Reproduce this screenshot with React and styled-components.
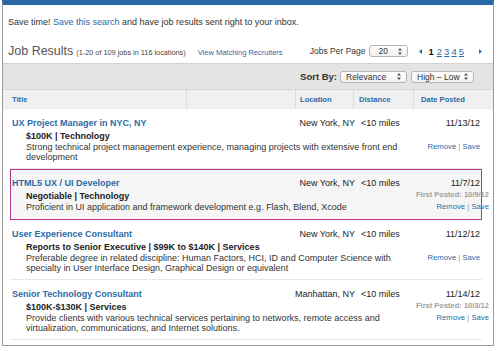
import React from "react";
import styled, { createGlobalStyle } from "styled-components";

const Global = createGlobalStyle`
  html, body { margin: 0; padding: 0; background: #fff; }
  body { font-family: "Liberation Sans", Arial, Helvetica, sans-serif; color: #333; }
`;

const BLUE = "#2d6aa8";

const Frame = styled.div`
  width: 490px;
  margin-left: 2px;
  border-top: 5px solid #2a67a6;
  border-left: 1px solid #9a9a9a;
  border-right: 1px solid #9a9a9a;
  border-bottom: 1px solid #9a9a9a;
  padding-bottom: 5px;
`;

const SaveRow = styled.div`
  padding: 11px 5px 0;
  font-size: 9px;
  line-height: 12px;
  color: #333;
`;

const Link = styled.a`
  color: ${BLUE};
  text-decoration: ${(p) => (p.$underline ? "underline" : "none")};
  cursor: pointer;
`;

const ResultsRow = styled.div`
  display: flex;
  align-items: center;
  height: 16px;
  padding: 15px 11px 4px 5px;
`;

const Heading = styled.div`
  display: flex;
  align-items: baseline;
  flex: 1;
`;

const HeadingTitle = styled.span`
  font-size: 12.5px;
  color: #555;
`;

const HeadingMeta = styled.span`
  font-size: 7.3px;
  color: #444;
  margin-left: 3px;
`;

const HeadingLink = styled(Link)`
  font-size: 7.5px;
  margin-left: 12px;
`;

const PerPage = styled.div`
  display: flex;
  align-items: center;
  font-size: 8.5px;
  color: #333;
`;

const SelectBox = styled.div`
  display: flex;
  align-items: center;
  justify-content: space-between;
  box-sizing: border-box;
  width: ${(p) => p.$w}px;
  height: ${(p) => p.$h || 12}px;
  margin-left: ${(p) => p.$ml || 0}px;
  padding: 0 5px 0 ${(p) => p.$pl || 5}px;
  border: 1px solid #b4b4b4;
  border-radius: 3px;
  background: linear-gradient(#ffffff, #f1f1f1);
  font-size: 8.5px;
  color: #333;
`;

const Pager = styled.div`
  display: flex;
  align-items: center;
  gap: 2px;
  margin-left: 11px;
  font-size: 9.5px;
`;

const PageCurrent = styled.span`
  font-weight: bold;
  color: #111;
  margin: 0 1px 0 5px;
`;

const PagerNext = styled.span`
  display: flex;
  margin-left: 13px;
`;

const SortBar = styled.div`
  display: flex;
  align-items: center;
  justify-content: flex-end;
  height: 25px;
  padding-right: 19px;
  background: #e4e4e4;
  border-top: 1px solid #d2d2d2;
`;

const SortLabel = styled.span`
  font-size: 9.5px;
  font-weight: bold;
  color: #333;
  margin-right: 3px;
`;

const HeaderRow = styled.div`
  display: grid;
  grid-template-columns: 183px 109px 58px 60px 1fr;
  height: 19px;
  background: #f0f0f0;
  border-top: 1px solid #d6d6d6;
`;

const HeaderCell = styled.div`
  display: flex;
  align-items: center;
  padding-left: ${(p) => p.$pl}px;
  border-left: ${(p) => (p.$first ? "none" : "1px solid #dcdcdc")};
  font-size: 7.6px;
  font-weight: bold;
  color: ${BLUE};
`;

const List = styled.div`
  margin: 0 11px 0 7px;
`;

const Row = styled.div`
  padding: ${(p) => (p.$hl ? "7px 1px 7px" : "8px 2px 6px")};
  border: ${(p) => (p.$hl ? "1px solid #b2378d" : "none")};
  border-bottom: 1px solid ${(p) => (p.$hl ? "#b2378d" : "#e6e6e6")};
  background: ${(p) => (p.$hl ? "#f5f5f5" : "transparent")};
`;

const TopLine = styled.div`
  display: grid;
  grid-template-columns: 283px 62px 60px 1fr;
  line-height: 13px;
  font-size: 9px;
`;

const JobTitle = styled(Link)`
  font-weight: bold;
`;

const Location = styled.span`
  text-align: right;
  padding-right: 2px;
  color: #222;
  white-space: nowrap;
`;

const Distance = styled.span`
  padding-left: 4px;
  color: #222;
`;

const DateCell = styled.span`
  text-align: right;
  color: #222;
`;

const Body = styled.div`
  display: grid;
  grid-template-columns: 404px 1fr;
  grid-template-rows: 12px auto;
`;

const Details = styled.div`
  padding-left: 14px;
  font-size: 9px;
  line-height: 12px;
  font-weight: bold;
  color: #222;
  white-space: nowrap;
`;

const FirstPosted = styled.div`
  text-align: right;
  font-size: 7.5px;
  line-height: 9px;
  font-weight: bold;
  color: #a0a0a0;
  white-space: nowrap;
`;

const Desc = styled.div`
  padding-left: 14px;
  font-size: 9px;
  line-height: 10px;
  color: #333;
`;

const Actions = styled.div`
  text-align: right;
  font-size: 7.7px;
  line-height: 10px;
  color: #999;
  white-space: nowrap;
`;

const Arrows = () => (
  <svg width="4" height="7" viewBox="0 0 4 7">
    <path d="M2 0 L4 2.5 L0 2.5 Z M0 4.5 L4 4.5 L2 7 Z" fill="#555" />
  </svg>
);

const Tri = ({ dir }) => (
  <svg width="3" height="5" viewBox="0 0 3 5">
    <path d={dir === "left" ? "M3 0 L0 2.5 L3 5 Z" : "M0 0 L3 2.5 L0 5 Z"} fill={BLUE} />
  </svg>
);

const jobs = [
  {
    title: "UX Project Manager in NYC, NY",
    location: "New York, NY",
    distance: "<10 miles",
    date: "11/13/12",
    details: "$100K | Technology",
    desc: "Strong technical project management experience, managing projects with extensive front end development",
  },
  {
    title: "HTML5 UX / UI Developer",
    location: "New York, NY",
    distance: "<10 miles",
    date: "11/7/12",
    first: "First Posted: 10/9/12",
    details: "Negotiable | Technology",
    desc: "Proficient in UI application and framework development e.g. Flash, Blend, Xcode",
    hl: true,
  },
  {
    title: "User Experience Consultant",
    location: "New York, NY",
    distance: "<10 miles",
    date: "11/12/12",
    details: "Reports to Senior Executive | $99K to $140K | Services",
    desc: "Preferable degree in related discipline: Human Factors, HCI, ID and Computer Science with specialty in User Interface Design, Graphical Design or equivalent",
  },
  {
    title: "Senior Technology Consultant",
    location: "Manhattan, NY",
    distance: "<10 miles",
    date: "11/14/12",
    first: "First Posted: 10/3/12",
    details: "$100K-$130K | Services",
    desc: "Provide clients with various technical services pertaining to networks, remote access and virtualization, communications, and Internet solutions.",
  },
];

export default function App() {
  return (
    <>
      <Global />
      <Frame>
        <SaveRow>
          Save time! <Link>Save this search</Link> and have job results sent right to your inbox.
        </SaveRow>
        <ResultsRow>
          <Heading>
            <HeadingTitle>Job Results</HeadingTitle>
            <HeadingMeta>(1-20 of 109 jobs in 116 locations)</HeadingMeta>
            <HeadingLink>View Matching Recruiters</HeadingLink>
          </Heading>
          <PerPage>
            Jobs Per Page
            <SelectBox $w={39} $ml={3} $pl={9}>
              <span>20</span>
              <Arrows />
            </SelectBox>
          </PerPage>
          <Pager>
            <Tri dir="left" />
            <PageCurrent>1</PageCurrent>
            <Link $underline>2</Link>
            <Link $underline>3</Link>
            <Link $underline>4</Link>
            <Link $underline>5</Link>
            <PagerNext>
              <Tri dir="right" />
            </PagerNext>
          </Pager>
        </ResultsRow>
        <SortBar>
          <SortLabel>Sort By:</SortLabel>
          <SelectBox $w={67} $h={12}>
            <span>Relevance</span>
            <Arrows />
          </SelectBox>
          <SelectBox $w={63} $h={12} $ml={4}>
            <span>High – Low</span>
            <Arrows />
          </SelectBox>
        </SortBar>
        <HeaderRow>
          <HeaderCell $first $pl={9}>Title</HeaderCell>
          <HeaderCell $pl={4} />
          <HeaderCell $pl={4}>Location</HeaderCell>
          <HeaderCell $pl={5}>Distance</HeaderCell>
          <HeaderCell $pl={7}>Date Posted</HeaderCell>
        </HeaderRow>
        <List>
          {jobs.map((j) => (
            <Row key={j.title} $hl={j.hl}>
              <TopLine>
                <JobTitle>{j.title}</JobTitle>
                <Location>{j.location}</Location>
                <Distance>{j.distance}</Distance>
                <DateCell>{j.date}</DateCell>
              </TopLine>
              <Body>
                <Details>{j.details}</Details>
                <FirstPosted>{j.first || ""}</FirstPosted>
                <Desc>{j.desc}</Desc>
                <Actions>
                  <Link>Remove</Link> | <Link>Save</Link>
                </Actions>
              </Body>
            </Row>
          ))}
        </List>
      </Frame>
    </>
  );
}
